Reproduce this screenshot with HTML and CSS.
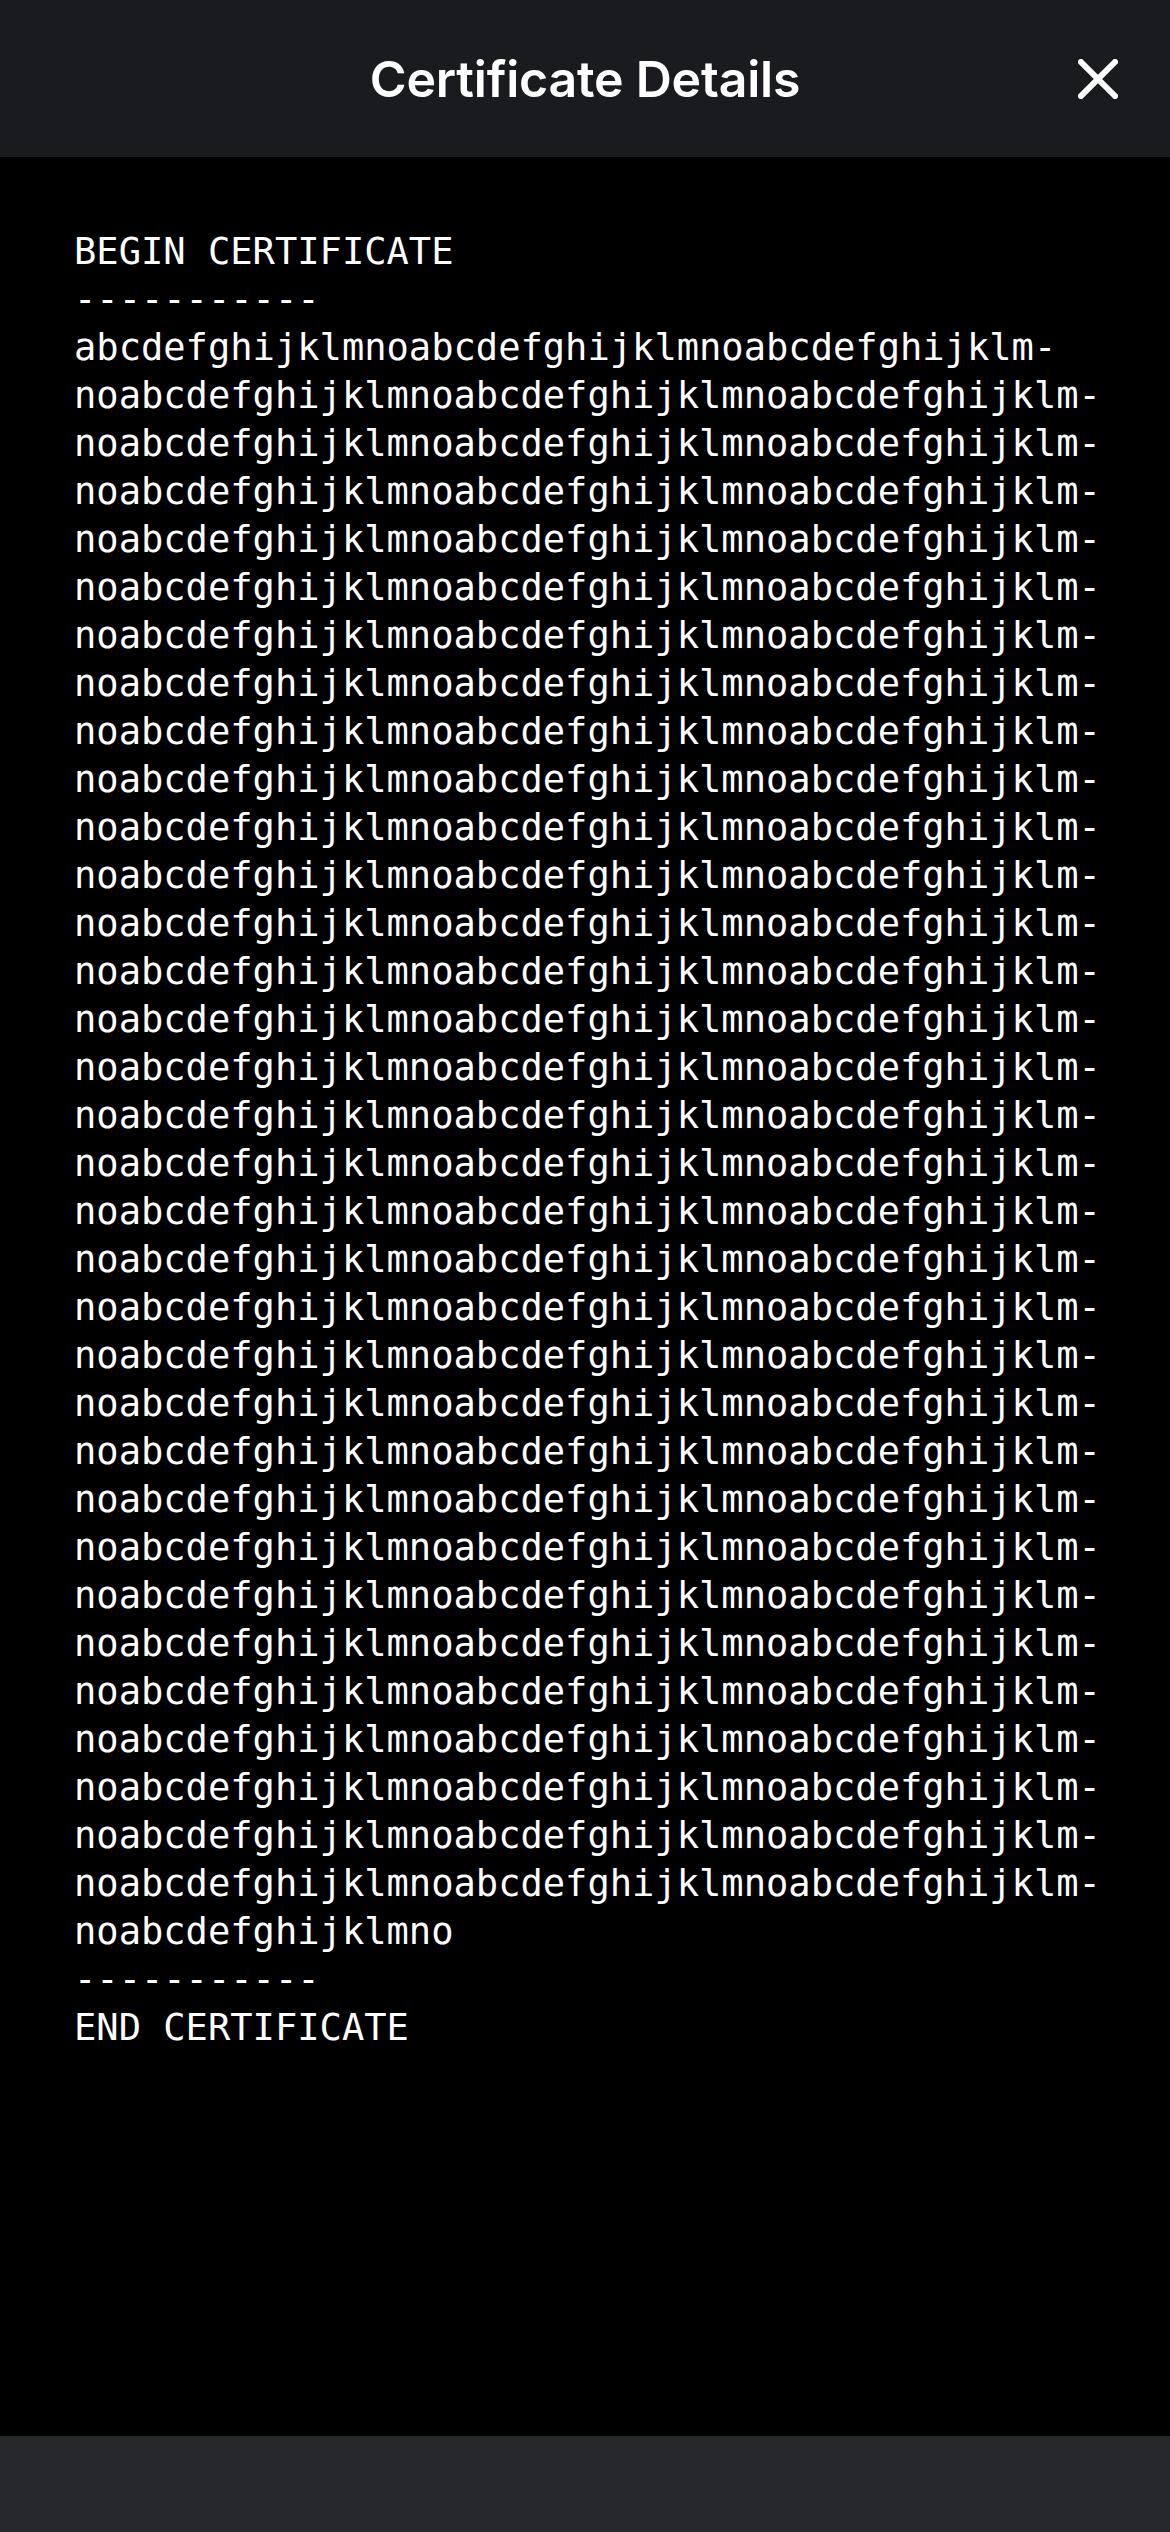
FILE: index.html
```html
<!DOCTYPE html>
<html lang="en">
<head>
<meta charset="utf-8">
<title>Certificate Details</title>
<link rel="stylesheet" href="styles.css">
</head>
<body>
<div class="screen">
  <header class="topbar">
    <h1 class="title">Certificate Details</h1>
    <button class="close" aria-label="Close">
      <svg width="40" height="40" viewBox="0 0 40 40"><path d="M3 3 L37 37 M37 3 L3 37" stroke="#fff" stroke-width="6" stroke-linecap="square" fill="none"/></svg>
    </button>
  </header>
  <main class="content">
<pre class="cert">BEGIN CERTIFICATE
-----------
abcdefghijklmnoabcdefghijklmnoabcdefghijklm-
noabcdefghijklmnoabcdefghijklmnoabcdefghijklm-
noabcdefghijklmnoabcdefghijklmnoabcdefghijklm-
noabcdefghijklmnoabcdefghijklmnoabcdefghijklm-
noabcdefghijklmnoabcdefghijklmnoabcdefghijklm-
noabcdefghijklmnoabcdefghijklmnoabcdefghijklm-
noabcdefghijklmnoabcdefghijklmnoabcdefghijklm-
noabcdefghijklmnoabcdefghijklmnoabcdefghijklm-
noabcdefghijklmnoabcdefghijklmnoabcdefghijklm-
noabcdefghijklmnoabcdefghijklmnoabcdefghijklm-
noabcdefghijklmnoabcdefghijklmnoabcdefghijklm-
noabcdefghijklmnoabcdefghijklmnoabcdefghijklm-
noabcdefghijklmnoabcdefghijklmnoabcdefghijklm-
noabcdefghijklmnoabcdefghijklmnoabcdefghijklm-
noabcdefghijklmnoabcdefghijklmnoabcdefghijklm-
noabcdefghijklmnoabcdefghijklmnoabcdefghijklm-
noabcdefghijklmnoabcdefghijklmnoabcdefghijklm-
noabcdefghijklmnoabcdefghijklmnoabcdefghijklm-
noabcdefghijklmnoabcdefghijklmnoabcdefghijklm-
noabcdefghijklmnoabcdefghijklmnoabcdefghijklm-
noabcdefghijklmnoabcdefghijklmnoabcdefghijklm-
noabcdefghijklmnoabcdefghijklmnoabcdefghijklm-
noabcdefghijklmnoabcdefghijklmnoabcdefghijklm-
noabcdefghijklmnoabcdefghijklmnoabcdefghijklm-
noabcdefghijklmnoabcdefghijklmnoabcdefghijklm-
noabcdefghijklmnoabcdefghijklmnoabcdefghijklm-
noabcdefghijklmnoabcdefghijklmnoabcdefghijklm-
noabcdefghijklmnoabcdefghijklmnoabcdefghijklm-
noabcdefghijklmnoabcdefghijklmnoabcdefghijklm-
noabcdefghijklmnoabcdefghijklmnoabcdefghijklm-
noabcdefghijklmnoabcdefghijklmnoabcdefghijklm-
noabcdefghijklmnoabcdefghijklmnoabcdefghijklm-
noabcdefghijklmnoabcdefghijklmnoabcdefghijklm-
noabcdefghijklmno
-----------
END CERTIFICATE</pre>
  </main>
  <footer class="bottombar"></footer>
</div>
</body>
</html>
```

FILE: styles.css
```css
html, body {
  margin: 0;
  padding: 0;
  background: #000;
}

.screen {
  width: 1170px;
  height: 2532px;
  display: flex;
  flex-direction: column;
  overflow: hidden;
}

.topbar {
  position: relative;
  height: 157px;
  flex: 0 0 157px;
  background: #1a1b1e;
  display: flex;
  align-items: center;
  justify-content: center;
}

.title {
  margin: 0;
  font-family: Inter, "Noto Sans", sans-serif;
  font-weight: 600;
  font-size: 50px;
  color: #fff;
  letter-spacing: -0.2px;
}

.close {
  position: absolute;
  right: 52px;
  top: 59px;
  width: 40px;
  height: 40px;
  padding: 0;
  border: 0;
  background: transparent;
  display: flex;
}

.content {
  flex: 1 1 auto;
  background: #000;
  padding: 71px 0 0 74px;
}

.cert {
  margin: 0;
  font-family: "DejaVu Sans Mono", "Liberation Mono", monospace;
  font-size: 37.1px;
  line-height: 48px;
  color: #fff;
  white-space: pre;
}

.bottombar {
  flex: 0 0 96px;
  height: 96px;
  background: #27282c;
}
```
